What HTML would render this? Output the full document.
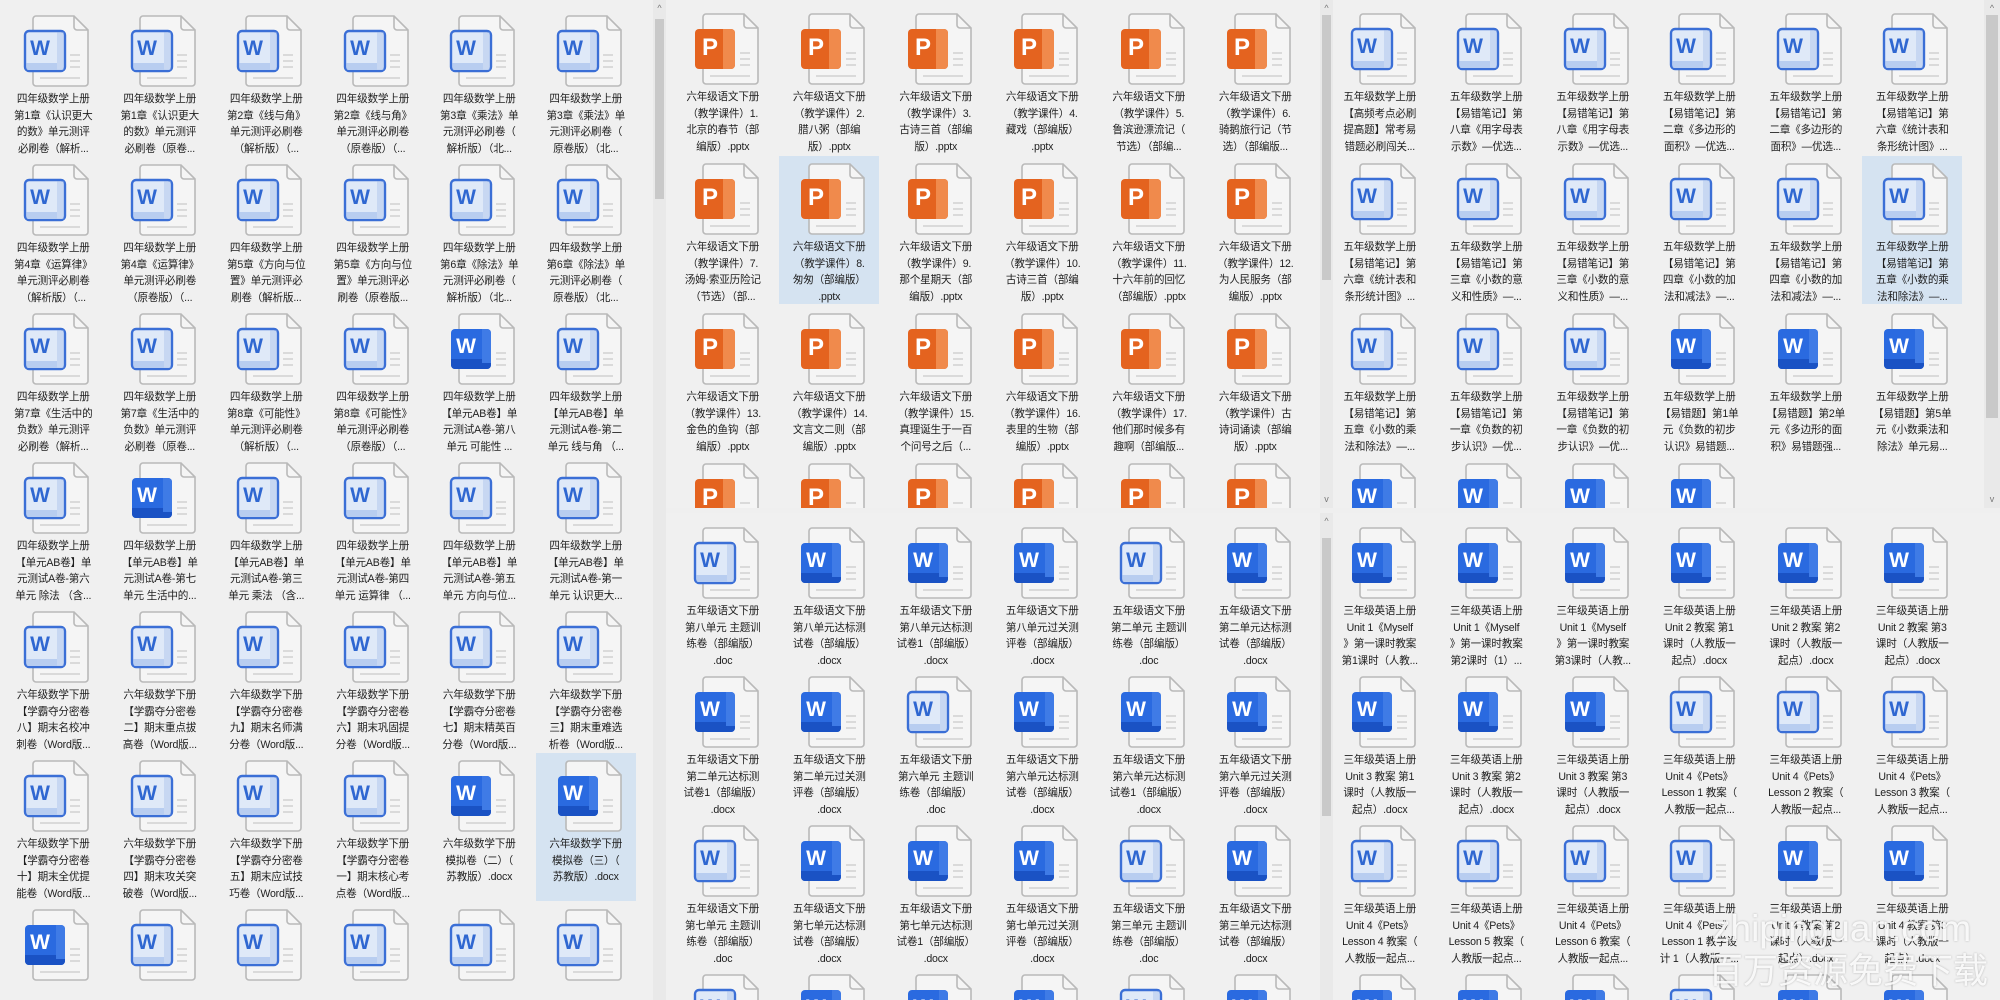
<!DOCTYPE html>
<html style="overflow:hidden"><head><meta charset="utf-8"><style>
*{margin:0;padding:0;box-sizing:border-box}
html,body{width:2000px;height:1000px;overflow:hidden}
body{background:#efefef;font-family:"Liberation Sans","Noto Sans CJK SC",sans-serif;position:relative}
.pane{position:absolute;overflow:hidden;background:#f0f0f0}
.g{position:absolute;display:flex;flex-wrap:wrap;width:640px}
.c{position:relative;width:106.5px;height:149px}
.t .c{height:150px}
.c svg{position:absolute;left:20px;top:0;width:70px;height:74px}
.c p{position:absolute;top:76px;left:0;width:106.5px;text-align:center;font-size:10.6px;line-height:16.6px;color:#1e1e1e;white-space:nowrap;letter-spacing:-0.2px}
.sel::before{content:"";position:absolute;left:3px;top:-7px;width:100px;height:148px;background:#d5e3f1}
.sb{position:absolute;background:#e9e9e9;overflow:hidden}
.th{position:absolute;left:2px;right:2px;background:#c9c9c9}
.ar{position:absolute;left:0;right:0;text-align:center;font-size:9px;color:#777;line-height:10px}
.wmb{position:absolute;left:1700px;top:900px;width:300px;height:100px;overflow:hidden}
.wm{position:absolute;color:rgba(255,255,255,.88);text-shadow:0 0 2px rgba(0,0,0,.25);white-space:nowrap}
</style></head><body>
<svg width="0" height="0" style="position:absolute">
<defs>
<symbol id="pg" viewBox="0 0 70 74">
<path d="M16 1h38l14 14v53a3 3 0 0 1-3 3H16a3 3 0 0 1-3-3V4a3 3 0 0 1 3-3z" fill="#f5f5f5" stroke="#b9b9b9" stroke-width="1.6"/>
<path d="M54 1v11a3 3 0 0 0 3 3h11" fill="none" stroke="#b9b9b9" stroke-width="1.6"/>
<path d="M50 40h10M50 46h10M50 52h10M20 63h40" stroke="#dadada" stroke-width="2"/>
</symbol>
<symbol id="wl" viewBox="0 0 70 74">
<use href="#pg"/>
<rect x="5" y="16" width="40" height="40" rx="4" fill="#dfe9f8" stroke="#3b6fd6" stroke-width="2.4"/>
<path d="M6.5 48h37v5a2 2 0 0 1-2 2h-33a2 2 0 0 1-2-2z" fill="#b8cdf0"/>
<path d="M37 17.5h6.5v37H37z" fill="#c7d7f2"/>
<text x="20" y="40" text-anchor="middle" font-family="Liberation Sans,sans-serif" font-weight="bold" font-size="21" fill="#2f67d1">W</text>
</symbol>
<symbol id="ws" viewBox="0 0 70 74">
<use href="#pg"/>
<rect x="5" y="16" width="40" height="40" rx="4" fill="#2a6ae0"/>
<path d="M5 46h40v6a4 4 0 0 1-4 4H9a4 4 0 0 1-4-4z" fill="#1a52c4"/>
<path d="M36 16h5a4 4 0 0 1 4 4v30h-9z" fill="#3f7be6"/>
<text x="20" y="40" text-anchor="middle" font-family="Liberation Sans,sans-serif" font-weight="bold" font-size="21" fill="#fff">W</text>
</symbol>
<symbol id="pp" viewBox="0 0 70 74">
<use href="#pg"/>
<rect x="5" y="16" width="40" height="40" rx="4" fill="#e4631f"/>
<path d="M33 16h8a4 4 0 0 1 4 4v32a4 4 0 0 1-4 4h-8z" fill="#f08a4c"/>
<text x="20" y="42" text-anchor="middle" font-family="Liberation Sans,sans-serif" font-weight="bold" font-size="24" fill="#fff">P</text>
</symbol>
</defs></svg>

<!-- LEFT PANE -->
<div class="pane" style="left:0;top:0;width:653px;height:1000px">
<div class="g" style="left:0;top:15px">
<div class="c"><svg><use href="#wl"/></svg><p>四年级数学上册<br>第1章《认识更大<br>的数》单元测评<br>必刷卷（解析...</p></div>
<div class="c"><svg><use href="#wl"/></svg><p>四年级数学上册<br>第1章《认识更大<br>的数》单元测评<br>必刷卷（原卷...</p></div>
<div class="c"><svg><use href="#wl"/></svg><p>四年级数学上册<br>第2章《线与角》<br>单元测评必刷卷<br>（解析版）（...</p></div>
<div class="c"><svg><use href="#wl"/></svg><p>四年级数学上册<br>第2章《线与角》<br>单元测评必刷卷<br>（原卷版）（...</p></div>
<div class="c"><svg><use href="#wl"/></svg><p>四年级数学上册<br>第3章《乘法》单<br>元测评必刷卷（<br>解析版）（北...</p></div>
<div class="c"><svg><use href="#wl"/></svg><p>四年级数学上册<br>第3章《乘法》单<br>元测评必刷卷（<br>原卷版）（北...</p></div>
<div class="c"><svg><use href="#wl"/></svg><p>四年级数学上册<br>第4章《运算律》<br>单元测评必刷卷<br>（解析版）（...</p></div>
<div class="c"><svg><use href="#wl"/></svg><p>四年级数学上册<br>第4章《运算律》<br>单元测评必刷卷<br>（原卷版）（...</p></div>
<div class="c"><svg><use href="#wl"/></svg><p>四年级数学上册<br>第5章《方向与位<br>置》单元测评必<br>刷卷（解析版...</p></div>
<div class="c"><svg><use href="#wl"/></svg><p>四年级数学上册<br>第5章《方向与位<br>置》单元测评必<br>刷卷（原卷版...</p></div>
<div class="c"><svg><use href="#wl"/></svg><p>四年级数学上册<br>第6章《除法》单<br>元测评必刷卷（<br>解析版）（北...</p></div>
<div class="c"><svg><use href="#wl"/></svg><p>四年级数学上册<br>第6章《除法》单<br>元测评必刷卷（<br>原卷版）（北...</p></div>
<div class="c"><svg><use href="#wl"/></svg><p>四年级数学上册<br>第7章《生活中的<br>负数》单元测评<br>必刷卷（解析...</p></div>
<div class="c"><svg><use href="#wl"/></svg><p>四年级数学上册<br>第7章《生活中的<br>负数》单元测评<br>必刷卷（原卷...</p></div>
<div class="c"><svg><use href="#wl"/></svg><p>四年级数学上册<br>第8章《可能性》<br>单元测评必刷卷<br>（解析版）（...</p></div>
<div class="c"><svg><use href="#wl"/></svg><p>四年级数学上册<br>第8章《可能性》<br>单元测评必刷卷<br>（原卷版）（...</p></div>
<div class="c"><svg><use href="#ws"/></svg><p>四年级数学上册<br>【单元AB卷】单<br>元测试A卷-第八<br>单元 可能性 ...</p></div>
<div class="c"><svg><use href="#wl"/></svg><p>四年级数学上册<br>【单元AB卷】单<br>元测试A卷-第二<br>单元 线与角 （...</p></div>
<div class="c"><svg><use href="#wl"/></svg><p>四年级数学上册<br>【单元AB卷】单<br>元测试A卷-第六<br>单元 除法 （含...</p></div>
<div class="c"><svg><use href="#ws"/></svg><p>四年级数学上册<br>【单元AB卷】单<br>元测试A卷-第七<br>单元 生活中的...</p></div>
<div class="c"><svg><use href="#wl"/></svg><p>四年级数学上册<br>【单元AB卷】单<br>元测试A卷-第三<br>单元 乘法 （含...</p></div>
<div class="c"><svg><use href="#wl"/></svg><p>四年级数学上册<br>【单元AB卷】单<br>元测试A卷-第四<br>单元 运算律 （...</p></div>
<div class="c"><svg><use href="#wl"/></svg><p>四年级数学上册<br>【单元AB卷】单<br>元测试A卷-第五<br>单元 方向与位...</p></div>
<div class="c"><svg><use href="#wl"/></svg><p>四年级数学上册<br>【单元AB卷】单<br>元测试A卷-第一<br>单元 认识更大...</p></div>
<div class="c"><svg><use href="#wl"/></svg><p>六年级数学下册<br>【学霸夺分密卷<br>八】期末名校冲<br>刺卷（Word版...</p></div>
<div class="c"><svg><use href="#wl"/></svg><p>六年级数学下册<br>【学霸夺分密卷<br>二】期末重点拔<br>高卷（Word版...</p></div>
<div class="c"><svg><use href="#wl"/></svg><p>六年级数学下册<br>【学霸夺分密卷<br>九】期末名师满<br>分卷（Word版...</p></div>
<div class="c"><svg><use href="#wl"/></svg><p>六年级数学下册<br>【学霸夺分密卷<br>六】期末巩固提<br>分卷（Word版...</p></div>
<div class="c"><svg><use href="#wl"/></svg><p>六年级数学下册<br>【学霸夺分密卷<br>七】期末精英百<br>分卷（Word版...</p></div>
<div class="c"><svg><use href="#wl"/></svg><p>六年级数学下册<br>【学霸夺分密卷<br>三】期末重难选<br>析卷（Word版...</p></div>
<div class="c"><svg><use href="#wl"/></svg><p>六年级数学下册<br>【学霸夺分密卷<br>十】期末全优提<br>能卷（Word版...</p></div>
<div class="c"><svg><use href="#wl"/></svg><p>六年级数学下册<br>【学霸夺分密卷<br>四】期末攻关突<br>破卷（Word版...</p></div>
<div class="c"><svg><use href="#wl"/></svg><p>六年级数学下册<br>【学霸夺分密卷<br>五】期末应试技<br>巧卷（Word版...</p></div>
<div class="c"><svg><use href="#wl"/></svg><p>六年级数学下册<br>【学霸夺分密卷<br>一】期末核心考<br>点卷（Word版...</p></div>
<div class="c"><svg><use href="#ws"/></svg><p>六年级数学下册<br>模拟卷（二）（<br>苏教版）.docx</p></div>
<div class="c sel"><svg><use href="#ws"/></svg><p>六年级数学下册<br>模拟卷（三）（<br>苏教版）.docx</p></div>
<div class="c"><svg><use href="#ws"/></svg></div>
<div class="c"><svg><use href="#wl"/></svg></div>
<div class="c"><svg><use href="#wl"/></svg></div>
<div class="c"><svg><use href="#wl"/></svg></div>
<div class="c"><svg><use href="#wl"/></svg></div>
<div class="c"><svg><use href="#wl"/></svg></div>
</div></div>
<div class="sb" style="left:653px;top:0;width:13px;height:1000px"><div class="ar" style="top:3px">^</div><div class="th" style="top:19px;height:180px"></div></div>

<!-- MIDDLE TOP -->
<div class="pane t" style="left:666px;top:0;width:654px;height:508px">
<div class="g" style="left:3.5px;top:13px">
<div class="c"><svg><use href="#pp"/></svg><p>六年级语文下册<br>（教学课件）1.<br>北京的春节（部<br>编版）.pptx</p></div>
<div class="c"><svg><use href="#pp"/></svg><p>六年级语文下册<br>（教学课件）2.<br>腊八粥（部编<br>版）.pptx</p></div>
<div class="c"><svg><use href="#pp"/></svg><p>六年级语文下册<br>（教学课件）3.<br>古诗三首（部编<br>版）.pptx</p></div>
<div class="c"><svg><use href="#pp"/></svg><p>六年级语文下册<br>（教学课件）4.<br>藏戏（部编版）<br>.pptx</p></div>
<div class="c"><svg><use href="#pp"/></svg><p>六年级语文下册<br>（教学课件）5.<br>鲁滨逊漂流记（<br>节选）（部编...</p></div>
<div class="c"><svg><use href="#pp"/></svg><p>六年级语文下册<br>（教学课件）6.<br>骑鹅旅行记（节<br>选）（部编版...</p></div>
<div class="c"><svg><use href="#pp"/></svg><p>六年级语文下册<br>（教学课件）7.<br>汤姆·索亚历险记<br>（节选）（部...</p></div>
<div class="c sel"><svg><use href="#pp"/></svg><p>六年级语文下册<br>（教学课件）8.<br>匆匆（部编版）<br>.pptx</p></div>
<div class="c"><svg><use href="#pp"/></svg><p>六年级语文下册<br>（教学课件）9.<br>那个星期天（部<br>编版）.pptx</p></div>
<div class="c"><svg><use href="#pp"/></svg><p>六年级语文下册<br>（教学课件）10.<br>古诗三首（部编<br>版）.pptx</p></div>
<div class="c"><svg><use href="#pp"/></svg><p>六年级语文下册<br>（教学课件）11.<br>十六年前的回忆<br>（部编版）.pptx</p></div>
<div class="c"><svg><use href="#pp"/></svg><p>六年级语文下册<br>（教学课件）12.<br>为人民服务（部<br>编版）.pptx</p></div>
<div class="c"><svg><use href="#pp"/></svg><p>六年级语文下册<br>（教学课件）13.<br>金色的鱼钩（部<br>编版）.pptx</p></div>
<div class="c"><svg><use href="#pp"/></svg><p>六年级语文下册<br>（教学课件）14.<br>文言文二则（部<br>编版）.pptx</p></div>
<div class="c"><svg><use href="#pp"/></svg><p>六年级语文下册<br>（教学课件）15.<br>真理诞生于一百<br>个问号之后（...</p></div>
<div class="c"><svg><use href="#pp"/></svg><p>六年级语文下册<br>（教学课件）16.<br>表里的生物（部<br>编版）.pptx</p></div>
<div class="c"><svg><use href="#pp"/></svg><p>六年级语文下册<br>（教学课件）17.<br>他们那时候多有<br>趣啊（部编版...</p></div>
<div class="c"><svg><use href="#pp"/></svg><p>六年级语文下册<br>（教学课件）古<br>诗词诵读（部编<br>版）.pptx</p></div>
<div class="c"><svg><use href="#pp"/></svg></div>
<div class="c"><svg><use href="#pp"/></svg></div>
<div class="c"><svg><use href="#pp"/></svg></div>
<div class="c"><svg><use href="#pp"/></svg></div>
<div class="c"><svg><use href="#pp"/></svg></div>
<div class="c"><svg><use href="#pp"/></svg></div>
</div></div>
<div class="sb" style="left:1320px;top:0;width:13px;height:508px"><div class="ar" style="top:3px">^</div><div class="th" style="top:15px;height:265px"></div><div class="ar" style="top:494px">v</div></div>

<!-- MIDDLE BOTTOM -->
<div class="pane" style="left:666px;top:513px;width:654px;height:487px">
<div class="g" style="left:3.5px;top:14px">
<div class="c"><svg><use href="#wl"/></svg><p>五年级语文下册<br>第八单元 主题训<br>练卷（部编版）<br>.doc</p></div>
<div class="c"><svg><use href="#ws"/></svg><p>五年级语文下册<br>第八单元达标测<br>试卷（部编版）<br>.docx</p></div>
<div class="c"><svg><use href="#ws"/></svg><p>五年级语文下册<br>第八单元达标测<br>试卷1（部编版）<br>.docx</p></div>
<div class="c"><svg><use href="#ws"/></svg><p>五年级语文下册<br>第八单元过关测<br>评卷（部编版）<br>.docx</p></div>
<div class="c"><svg><use href="#wl"/></svg><p>五年级语文下册<br>第二单元 主题训<br>练卷（部编版）<br>.doc</p></div>
<div class="c"><svg><use href="#ws"/></svg><p>五年级语文下册<br>第二单元达标测<br>试卷（部编版）<br>.docx</p></div>
<div class="c"><svg><use href="#ws"/></svg><p>五年级语文下册<br>第二单元达标测<br>试卷1（部编版）<br>.docx</p></div>
<div class="c"><svg><use href="#ws"/></svg><p>五年级语文下册<br>第二单元过关测<br>评卷（部编版）<br>.docx</p></div>
<div class="c"><svg><use href="#wl"/></svg><p>五年级语文下册<br>第六单元 主题训<br>练卷（部编版）<br>.doc</p></div>
<div class="c"><svg><use href="#ws"/></svg><p>五年级语文下册<br>第六单元达标测<br>试卷（部编版）<br>.docx</p></div>
<div class="c"><svg><use href="#ws"/></svg><p>五年级语文下册<br>第六单元达标测<br>试卷1（部编版）<br>.docx</p></div>
<div class="c"><svg><use href="#ws"/></svg><p>五年级语文下册<br>第六单元过关测<br>评卷（部编版）<br>.docx</p></div>
<div class="c"><svg><use href="#wl"/></svg><p>五年级语文下册<br>第七单元 主题训<br>练卷（部编版）<br>.doc</p></div>
<div class="c"><svg><use href="#ws"/></svg><p>五年级语文下册<br>第七单元达标测<br>试卷（部编版）<br>.docx</p></div>
<div class="c"><svg><use href="#ws"/></svg><p>五年级语文下册<br>第七单元达标测<br>试卷1（部编版）<br>.docx</p></div>
<div class="c"><svg><use href="#ws"/></svg><p>五年级语文下册<br>第七单元过关测<br>评卷（部编版）<br>.docx</p></div>
<div class="c"><svg><use href="#wl"/></svg><p>五年级语文下册<br>第三单元 主题训<br>练卷（部编版）<br>.doc</p></div>
<div class="c"><svg><use href="#ws"/></svg><p>五年级语文下册<br>第三单元达标测<br>试卷（部编版）<br>.docx</p></div>
<div class="c"><svg><use href="#wl"/></svg></div>
<div class="c"><svg><use href="#ws"/></svg></div>
<div class="c"><svg><use href="#ws"/></svg></div>
<div class="c"><svg><use href="#ws"/></svg></div>
<div class="c"><svg><use href="#wl"/></svg></div>
<div class="c"><svg><use href="#ws"/></svg></div>
</div></div>
<div class="sb" style="left:1320px;top:513px;width:13px;height:487px"><div class="ar" style="top:3px">^</div><div class="th" style="top:25px;height:278px"></div></div>

<!-- RIGHT TOP -->
<div class="pane t" style="left:1333px;top:0;width:651px;height:508px">
<div class="g" style="left:-6.5px;top:13px">
<div class="c"><svg><use href="#wl"/></svg><p>五年级数学上册<br>【高频考点必刷<br>提高题】常考易<br>错题必刷闯关...</p></div>
<div class="c"><svg><use href="#wl"/></svg><p>五年级数学上册<br>【易错笔记】第<br>八章《用字母表<br>示数》—优选...</p></div>
<div class="c"><svg><use href="#wl"/></svg><p>五年级数学上册<br>【易错笔记】第<br>八章《用字母表<br>示数》—优选...</p></div>
<div class="c"><svg><use href="#wl"/></svg><p>五年级数学上册<br>【易错笔记】第<br>二章《多边形的<br>面积》—优选...</p></div>
<div class="c"><svg><use href="#wl"/></svg><p>五年级数学上册<br>【易错笔记】第<br>二章《多边形的<br>面积》—优选...</p></div>
<div class="c"><svg><use href="#wl"/></svg><p>五年级数学上册<br>【易错笔记】第<br>六章《统计表和<br>条形统计图》...</p></div>
<div class="c"><svg><use href="#wl"/></svg><p>五年级数学上册<br>【易错笔记】第<br>六章《统计表和<br>条形统计图》...</p></div>
<div class="c"><svg><use href="#wl"/></svg><p>五年级数学上册<br>【易错笔记】第<br>三章《小数的意<br>义和性质》—...</p></div>
<div class="c"><svg><use href="#wl"/></svg><p>五年级数学上册<br>【易错笔记】第<br>三章《小数的意<br>义和性质》—...</p></div>
<div class="c"><svg><use href="#wl"/></svg><p>五年级数学上册<br>【易错笔记】第<br>四章《小数的加<br>法和减法》—...</p></div>
<div class="c"><svg><use href="#wl"/></svg><p>五年级数学上册<br>【易错笔记】第<br>四章《小数的加<br>法和减法》—...</p></div>
<div class="c sel"><svg><use href="#wl"/></svg><p>五年级数学上册<br>【易错笔记】第<br>五章《小数的乘<br>法和除法》—...</p></div>
<div class="c"><svg><use href="#wl"/></svg><p>五年级数学上册<br>【易错笔记】第<br>五章《小数的乘<br>法和除法》—...</p></div>
<div class="c"><svg><use href="#wl"/></svg><p>五年级数学上册<br>【易错笔记】第<br>一章《负数的初<br>步认识》—优...</p></div>
<div class="c"><svg><use href="#wl"/></svg><p>五年级数学上册<br>【易错笔记】第<br>一章《负数的初<br>步认识》—优...</p></div>
<div class="c"><svg><use href="#ws"/></svg><p>五年级数学上册<br>【易错题】第1单<br>元《负数的初步<br>认识》易错题...</p></div>
<div class="c"><svg><use href="#ws"/></svg><p>五年级数学上册<br>【易错题】第2单<br>元《多边形的面<br>积》易错题强...</p></div>
<div class="c"><svg><use href="#ws"/></svg><p>五年级数学上册<br>【易错题】第5单<br>元《小数乘法和<br>除法》单元易...</p></div>
<div class="c"><svg><use href="#ws"/></svg></div>
<div class="c"><svg><use href="#ws"/></svg></div>
<div class="c"><svg><use href="#ws"/></svg></div>
<div class="c"><svg><use href="#ws"/></svg></div>
</div></div>
<div class="sb" style="left:1984px;top:0;width:16px;height:508px"><div class="ar" style="top:3px">^</div><div class="th" style="top:15px;height:403px"></div><div class="ar" style="top:494px">v</div></div>

<!-- RIGHT BOTTOM -->
<div class="pane" style="left:1333px;top:513px;width:667px;height:487px">
<div class="g" style="left:-6.5px;top:14px">
<div class="c"><svg><use href="#ws"/></svg><p>三年级英语上册<br>Unit 1《Myself<br>》第一课时教案<br>第1课时（人教...</p></div>
<div class="c"><svg><use href="#ws"/></svg><p>三年级英语上册<br>Unit 1《Myself<br>》第一课时教案<br>第2课时（1）...</p></div>
<div class="c"><svg><use href="#ws"/></svg><p>三年级英语上册<br>Unit 1《Myself<br>》第一课时教案<br>第3课时（人教...</p></div>
<div class="c"><svg><use href="#ws"/></svg><p>三年级英语上册<br>Unit 2 教案 第1<br>课时（人教版一<br>起点）.docx</p></div>
<div class="c"><svg><use href="#ws"/></svg><p>三年级英语上册<br>Unit 2 教案 第2<br>课时（人教版一<br>起点）.docx</p></div>
<div class="c"><svg><use href="#ws"/></svg><p>三年级英语上册<br>Unit 2 教案 第3<br>课时（人教版一<br>起点）.docx</p></div>
<div class="c"><svg><use href="#ws"/></svg><p>三年级英语上册<br>Unit 3 教案 第1<br>课时（人教版一<br>起点）.docx</p></div>
<div class="c"><svg><use href="#ws"/></svg><p>三年级英语上册<br>Unit 3 教案 第2<br>课时（人教版一<br>起点）.docx</p></div>
<div class="c"><svg><use href="#ws"/></svg><p>三年级英语上册<br>Unit 3 教案 第3<br>课时（人教版一<br>起点）.docx</p></div>
<div class="c"><svg><use href="#wl"/></svg><p>三年级英语上册<br>Unit 4《Pets》<br>Lesson 1 教案（<br>人教版一起点...</p></div>
<div class="c"><svg><use href="#wl"/></svg><p>三年级英语上册<br>Unit 4《Pets》<br>Lesson 2 教案（<br>人教版一起点...</p></div>
<div class="c"><svg><use href="#wl"/></svg><p>三年级英语上册<br>Unit 4《Pets》<br>Lesson 3 教案（<br>人教版一起点...</p></div>
<div class="c"><svg><use href="#wl"/></svg><p>三年级英语上册<br>Unit 4《Pets》<br>Lesson 4 教案（<br>人教版一起点...</p></div>
<div class="c"><svg><use href="#wl"/></svg><p>三年级英语上册<br>Unit 4《Pets》<br>Lesson 5 教案（<br>人教版一起点...</p></div>
<div class="c"><svg><use href="#wl"/></svg><p>三年级英语上册<br>Unit 4《Pets》<br>Lesson 6 教案（<br>人教版一起点...</p></div>
<div class="c"><svg><use href="#wl"/></svg><p>三年级英语上册<br>Unit 4《Pets》<br>Lesson 1 教学设<br>计 1（人教版一...</p></div>
<div class="c"><svg><use href="#ws"/></svg><p>三年级英语上册<br>Unit 4 教案 第2<br>课时（人教版一<br>起点）.docx</p></div>
<div class="c"><svg><use href="#ws"/></svg><p>三年级英语上册<br>Unit 4 教案 第3<br>课时（人教版一<br>起点）.docx</p></div>
<div class="c"><svg><use href="#ws"/></svg></div>
<div class="c"><svg><use href="#ws"/></svg></div>
<div class="c"><svg><use href="#ws"/></svg></div>
<div class="c"><svg><use href="#wl"/></svg></div>
<div class="c"><svg><use href="#ws"/></svg></div>
<div class="c"><svg><use href="#ws"/></svg></div>
</div></div>

<div class="wmb">
<div class="wm" style="left:12px;top:8px;font-size:37px;font-family:'Liberation Sans',sans-serif">zhipinguan.com</div>
<div class="wm" style="left:8px;top:50px;font-size:35px;line-height:44px;font-family:'Liberation Sans','Noto Sans CJK SC',sans-serif">百万资源免费下载</div>
</div>
</body></html>
